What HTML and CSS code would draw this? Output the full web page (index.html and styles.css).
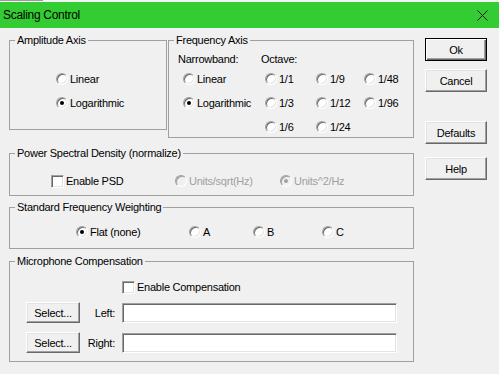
FILE: index.html
```html
<!DOCTYPE html>
<html>
<head>
    <title>Scaling Control</title>
    <link rel="stylesheet" href="styles.css">
</head>
<body>

    <div class="top-strip"><span class="top-line"></span></div>

    <div class="titlebar">
        <span class="title">Scaling Control</span>
        <svg class="close" width="11" height="11" viewBox="0 0 11 11">
            <path d="M0.5 0.5 L10.5 10.5 M10.5 0.5 L0.5 10.5" stroke="#111" stroke-width="1" fill="none"/>
        </svg>
    </div>

    <div class="client">
        <div class="main">

            <div class="top-row">
                <!-- Amplitude axis -->
                <div class="group amp-group">
                    <span class="caption">Amplitude Axis</span>
                    <label class="opt"><span class="radio"></span>Linear</label>
                    <label class="opt"><span class="radio on"></span>Logarithmic</label>
                </div>

                <!-- Frequency axis -->
                <div class="group freq-group">
                    <span class="caption">Frequency Axis</span>
                    <div class="freq-head">
                        <span class="head-narrow">Narrowband:</span>
                        <span>Octave:</span>
                    </div>
                    <div class="freq-grid">
                        <label class="opt"><span class="radio"></span>Linear</label>
                        <label class="opt"><span class="radio"></span>1/1</label>
                        <label class="opt"><span class="radio"></span>1/9</label>
                        <label class="opt"><span class="radio"></span>1/48</label>

                        <label class="opt"><span class="radio on"></span>Logarithmic</label>
                        <label class="opt"><span class="radio"></span>1/3</label>
                        <label class="opt"><span class="radio"></span>1/12</label>
                        <label class="opt"><span class="radio"></span>1/96</label>

                        <span></span>
                        <label class="opt"><span class="radio"></span>1/6</label>
                        <label class="opt"><span class="radio"></span>1/24</label>
                    </div>
                </div>
            </div>

            <!-- PSD -->
            <div class="group psd-group">
                <span class="caption">Power Spectral Density (normalize)</span>
                <label class="opt psd-enable"><span class="check"></span>Enable PSD</label>
                <label class="opt off psd-sqrt"><span class="radio"></span>Units/sqrt(Hz)</label>
                <label class="opt off"><span class="radio on"></span>Units^2/Hz</label>
            </div>

            <!-- Weighting -->
            <div class="group weight-group">
                <span class="caption">Standard Frequency Weighting</span>
                <label class="opt w-flat"><span class="radio on"></span>Flat (none)</label>
                <label class="opt w-a"><span class="radio"></span>A</label>
                <label class="opt w-b"><span class="radio"></span>B</label>
                <label class="opt"><span class="radio"></span>C</label>
            </div>

            <!-- Microphone -->
            <div class="group mic-group">
                <span class="caption">Microphone Compensation</span>
                <label class="opt mic-enable"><span class="check"></span>Enable Compensation</label>
                <div class="mic-row">
                    <button class="btn btn-small">Select...</button>
                    <span class="mic-label">Left:</span>
                    <input class="field" type="text">
                </div>
                <div class="mic-row">
                    <button class="btn btn-small">Select...</button>
                    <span class="mic-label">Right:</span>
                    <input class="field" type="text">
                </div>
            </div>
        </div>

        <div class="side">
            <button class="btn default">Ok</button>
            <button class="btn btn-cancel">Cancel</button>
            <button class="btn btn-defaults">Defaults</button>
            <button class="btn btn-help">Help</button>
        </div>
    </div>

</body>
</html>
```

FILE: styles.css
```css
body {
    margin: 0;
    padding: 0;
    background-color: #f0f0f0;
    font-family: "Liberation Sans", Arial, sans-serif;
    font-size: 11px;
    letter-spacing: -0.25px;
    color: #000;
}

/* thin strip above the title bar */
.top-strip {
    height: 2px;
    background-color: #f4f4f4;
}

.top-line {
    display: block;
    width: 43px;
    height: 1px;
    background-color: #9a9a9a;
}

.titlebar {
    height: 26px;
    background-color: #33cc33;
    display: flex;
    align-items: center;
    justify-content: space-between;
    padding: 0 11px 0 3px;
}

.title {
    font-size: 12px;
    letter-spacing: -0.3px;
    line-height: 14px;
}

.close {
    display: block;
    margin-top: 1px;
}

.client {
    display: flex;
    padding: 10px 0 0 9px;
}

.main {
    width: 405px;
    padding-top: 2px;
}

.top-row {
    display: flex;
    align-items: flex-start;
}

/** Group boxes **/

.group {
    position: relative;
    box-sizing: border-box;
    border: 1px solid #a0a0a0;
}

.caption {
    position: absolute;
    top: -7px;
    left: 5px;
    padding: 0 2px;
    line-height: 13px;
    background-color: #f0f0f0;
    white-space: nowrap;
}

.amp-group {
    width: 158px;
    height: 90px;
    margin-right: 1px;
    padding: 32px 0 0 46px;
    display: flex;
    flex-direction: column;
    gap: 12px;
}

.freq-group {
    width: 246px;
    height: 98px;
    padding: 12px 0 0 9px;
}

.freq-head {
    display: flex;
    line-height: 13px;
}

.head-narrow {
    width: 83px;
}

.freq-grid {
    display: grid;
    grid-template-columns: 82px 51px 48px auto;
    grid-auto-rows: 12px;
    row-gap: 12px;
    margin: 7px 0 0 5px;
}

.psd-group {
    height: 43px;
    margin-top: 15px;
    padding: 13px 0 0 41px;
    display: flex;
    align-items: center;
    align-content: flex-start;
}

.psd-group .opt {
    height: 13px;
}

.psd-enable {
    width: 124px;
}

.psd-sqrt {
    width: 105px;
}

.weight-group {
    height: 42px;
    margin-top: 11px;
    padding: 18px 0 0 66px;
    display: flex;
    align-items: flex-start;
}

.w-flat {
    width: 113px;
}

.w-a {
    width: 64px;
}

.w-b {
    width: 69px;
}

.mic-group {
    height: 101px;
    margin-top: 12px;
    padding: 19px 0 0 16px;
}

.mic-enable {
    margin-left: 96px;
    height: 13px;
}

.mic-row {
    display: flex;
    align-items: center;
    margin-top: 9px;
    height: 21px;
}

.mic-label {
    width: 35px;
    text-align: right;
    margin-right: 7px;
}

/** Controls **/

.opt {
    display: flex;
    align-items: center;
    gap: 2px;
    height: 12px;
    line-height: 13px;
    white-space: nowrap;
}

.radio {
    position: relative;
    box-sizing: border-box;
    flex: none;
    width: 12px;
    height: 12px;
    border-radius: 50%;
    background-color: #fff;
    border: 1px solid;
    border-color: #a0a0a0 #fff #fff #a0a0a0;
    box-shadow: inset 1px 1px #696969, inset -1px -1px #e3e3e3;
}

.radio.on::after {
    content: "";
    position: absolute;
    left: 3px;
    top: 3px;
    width: 4px;
    height: 4px;
    border-radius: 50%;
    background-color: #000;
}

.check {
    box-sizing: border-box;
    flex: none;
    width: 13px;
    height: 13px;
    background-color: #fff;
    border: 1px solid;
    border-color: #a0a0a0 #fff #fff #a0a0a0;
    box-shadow: inset 1px 1px #696969, inset -1px -1px #e3e3e3;
}

/* disabled options */
.opt.off {
    color: #a0a0a0;
}

.off .radio {
    background-color: #f0f0f0;
    box-shadow: inset 1px 1px #a0a0a0;
}

.off .radio.on::after {
    background-color: #a0a0a0;
}

.field {
    box-sizing: border-box;
    width: 275px;
    height: 20px;
    margin: 0;
    padding: 0 3px;
    background-color: #fff;
    border: 1px solid;
    border-color: #a0a0a0 #fff #fff #a0a0a0;
    box-shadow: inset 1px 1px #696969, inset -1px -1px #e3e3e3;
    outline: none;
}

.btn {
    box-sizing: border-box;
    width: 62px;
    height: 23px;
    margin: 0;
    padding: 0;
    background-color: #f0f0f0;
    font-family: "Liberation Sans", Arial, sans-serif;
    font-size: 11px;
    letter-spacing: -0.25px;
    color: #000;
    border: 1px solid;
    border-color: #fff #696969 #696969 #fff;
    box-shadow: inset -1px -1px #a0a0a0, inset 1px 1px #e3e3e3;
}

.btn.default {
    border-color: #000;
    box-shadow: inset 1px 1px #fff, inset -1px -1px #696969, inset -2px -2px #a0a0a0;
}

.btn-small {
    width: 54px;
    height: 21px;
}

.side {
    display: flex;
    flex-direction: column;
    margin-left: 11px;
}

.btn-cancel {
    margin-top: 8px;
}

.btn-defaults {
    margin-top: 29px;
}

.btn-help {
    margin-top: 13px;
}
```
